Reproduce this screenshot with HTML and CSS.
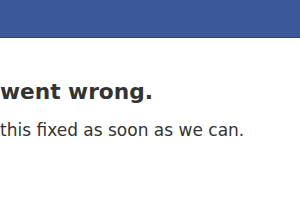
FILE: index.html
```html
<!DOCTYPE html>
<html lang="en">
<head>
    <meta charset="UTF-8">
    <title>Error</title>
    <link rel="stylesheet" href="styles.css">
</head>
<body>
    <div class="bluebar"></div>
    <div class="content">
        <h2 class="title">went wrong.</h2>
        <p class="message">this fixed as soon as we can.</p>
    </div>
</body>
</html>
```

FILE: styles.css
```css
body {
    margin: 0;
    background: #fff;
    font-family: "DejaVu Sans", sans-serif;
    color: #333;
}
.bluebar {
    height: 37px;
    background: #3b5998;
    border-bottom: 1px solid #29447e;
}
.content {
    padding-top: 41px;
}
.title {
    margin: 0;
    font-size: 21.7px;
    line-height: 26px;
    font-weight: bold;
}
.message {
    margin: 15px 0 0;
    font-size: 17px;
    line-height: 21px;
}
```
